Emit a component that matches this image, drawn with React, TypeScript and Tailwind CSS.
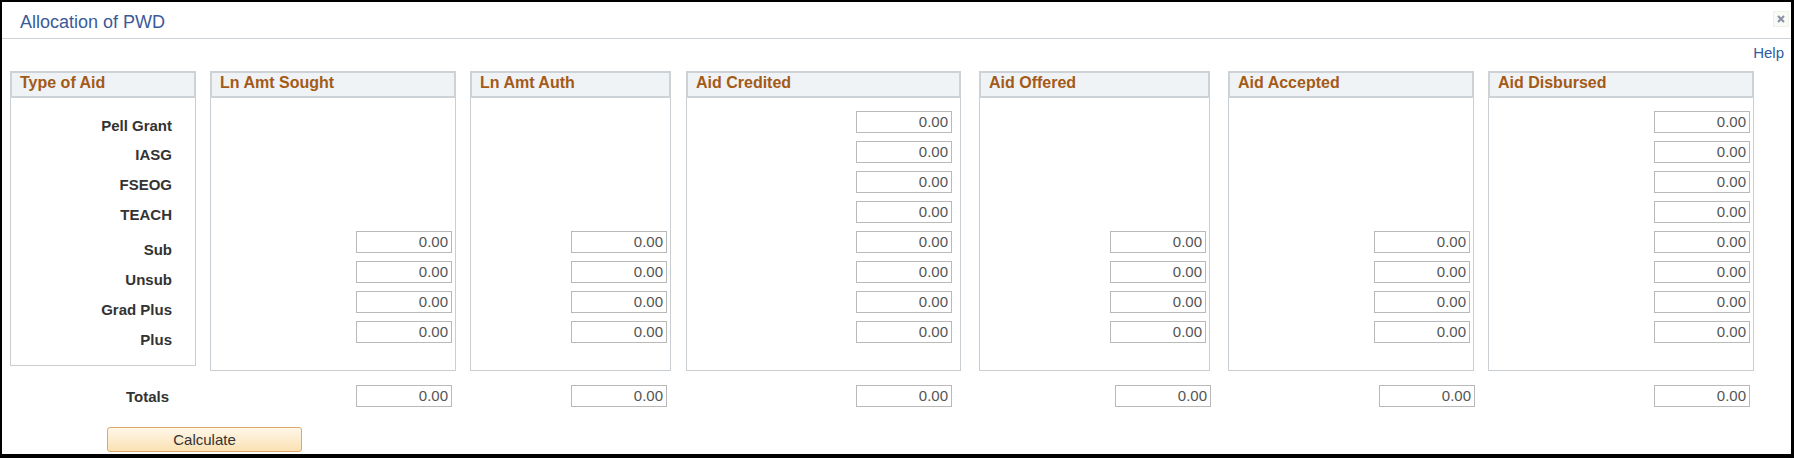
import React from 'react';

type Column = {
  title: string;
  width: string;
  gap: string;
  pad: string;
  rows: boolean[];
};

const loansOnly = [false, false, false, false, true, true, true, true];
const allRows = [true, true, true, true, true, true, true, true];

const columns: Column[] = [
  { title: 'Ln Amt Sought', width: 'w-[246px]', gap: 'ml-[14px]', pad: 'pr-[3px]', rows: loansOnly },
  { title: 'Ln Amt Auth', width: 'w-[201px]', gap: 'ml-[14px]', pad: 'pr-[3px]', rows: loansOnly },
  { title: 'Aid Credited', width: 'w-[275px]', gap: 'ml-[15px]', pad: 'pr-[8px]', rows: allRows },
  { title: 'Aid Offered', width: 'w-[231px]', gap: 'ml-[18px]', pad: 'pr-[3px]', rows: loansOnly },
  { title: 'Aid Accepted', width: 'w-[246px]', gap: 'ml-[18px]', pad: 'pr-[3px]', rows: loansOnly },
  { title: 'Aid Disbursed', width: 'w-[266px]', gap: 'ml-[14px]', pad: 'pr-[3px]', rows: allRows },
];

const aidTypes = [
  { label: 'Pell Grant', h: 'h-[29px]' },
  { label: 'IASG', h: 'h-[30px]' },
  { label: 'FSEOG', h: 'h-[30px]' },
  { label: 'TEACH', h: 'h-[35px]' },
  { label: 'Sub', h: 'h-[30px]' },
  { label: 'Unsub', h: 'h-[30px]' },
  { label: 'Grad Plus', h: 'h-[30px]' },
  { label: 'Plus', h: 'h-[17px]' },
];

const totalGaps = ['ml-[187px]', 'ml-[119px]', 'ml-[189px]', 'ml-[163px]', 'ml-[168px]', 'ml-[179px]'];

function AmountField({ className = '' }: { className?: string }) {
  return (
    <div
      className={`h-[22px] w-[96px] border border-[#b9b9b9] bg-white pr-[3px] text-right text-[15px] leading-[20px] text-[#555] ${className}`}
    >
      0.00
    </div>
  );
}

function BoxHeader({ title }: { title: string }) {
  return (
    <div className="-mx-px -mt-px h-[27px] border-2 border-[#cdd2d7] bg-[#eff3f5] pl-[8px] text-[16px] font-bold leading-[19px] text-[#a45a17]">
      {title}
    </div>
  );
}

function CloseIcon() {
  return (
    <svg width="16" height="16" viewBox="0 0 16 16" className="mt-[9px] mr-[2px]">
      <rect x="0.5" y="0.5" width="15" height="15" fill="#f8faf5" stroke="#dfe7d2" strokeDasharray="1 1" />
      <path d="M5 5 L11 11 M11 5 L5 11" stroke="#8a8fa6" strokeWidth="2" />
    </svg>
  );
}

export default function App() {
  return (
    <div className="h-[458px] w-[1794px] bg-black pt-[2px] pl-[2px] pr-[3px] pb-[4px] font-['Liberation_Sans',Arial,sans-serif]">
      <div className="flex h-full flex-col bg-white">
        <div className="flex h-[37px] shrink-0 items-start justify-between border-b border-[#cdd2d7]">
          <h1 className="pt-[10px] pl-[18px] text-[18px] leading-[20px] text-[#3a5a98]">Allocation of PWD</h1>
          <CloseIcon />
        </div>

        <div className="mt-[5px] flex justify-end pr-[7px]">
          <a className="text-[15px] leading-[17px] text-[#2d5ca3]">Help</a>
        </div>

        <div className="mt-[10px] flex items-start">
          <div className="ml-[8px] flex h-[295px] w-[186px] flex-col border border-[#c9ced3]">
            <BoxHeader title="Type of Aid" />
            <div className="flex flex-col items-end pt-[19px] pr-[23px]">
              {aidTypes.map((t) => (
                <div key={t.label} className={`${t.h} text-[15px] font-bold leading-[17px] text-[#333]`}>
                  {t.label}
                </div>
              ))}
            </div>
          </div>

          {columns.map((col) => (
            <div key={col.title} className={`${col.gap} ${col.width} flex h-[300px] flex-col border border-[#c9ced3]`}>
              <BoxHeader title={col.title} />
              <div className={`flex flex-col items-end gap-[8px] pt-[13px] ${col.pad}`}>
                {col.rows.map((shown, i) =>
                  shown ? <AmountField key={i} /> : <div key={i} className="h-[22px]" />
                )}
              </div>
            </div>
          ))}
        </div>

        <div className="mt-[14px] flex items-start">
          <div className="mt-[3px] w-[167px] text-right text-[15px] font-bold leading-[17px] text-[#333]">Totals</div>
          {totalGaps.map((g, i) => (
            <AmountField key={i} className={g} />
          ))}
        </div>

        <div className="mt-[20px] pl-[105px]">
          <button className="h-[25px] w-[195px] rounded-[3px] border border-[#dca86b] bg-linear-to-b from-[#fef7e8] to-[#fbe1b3] text-[15px] leading-[23px] text-[#333]">
            Calculate
          </button>
        </div>
      </div>
    </div>
  );
}
